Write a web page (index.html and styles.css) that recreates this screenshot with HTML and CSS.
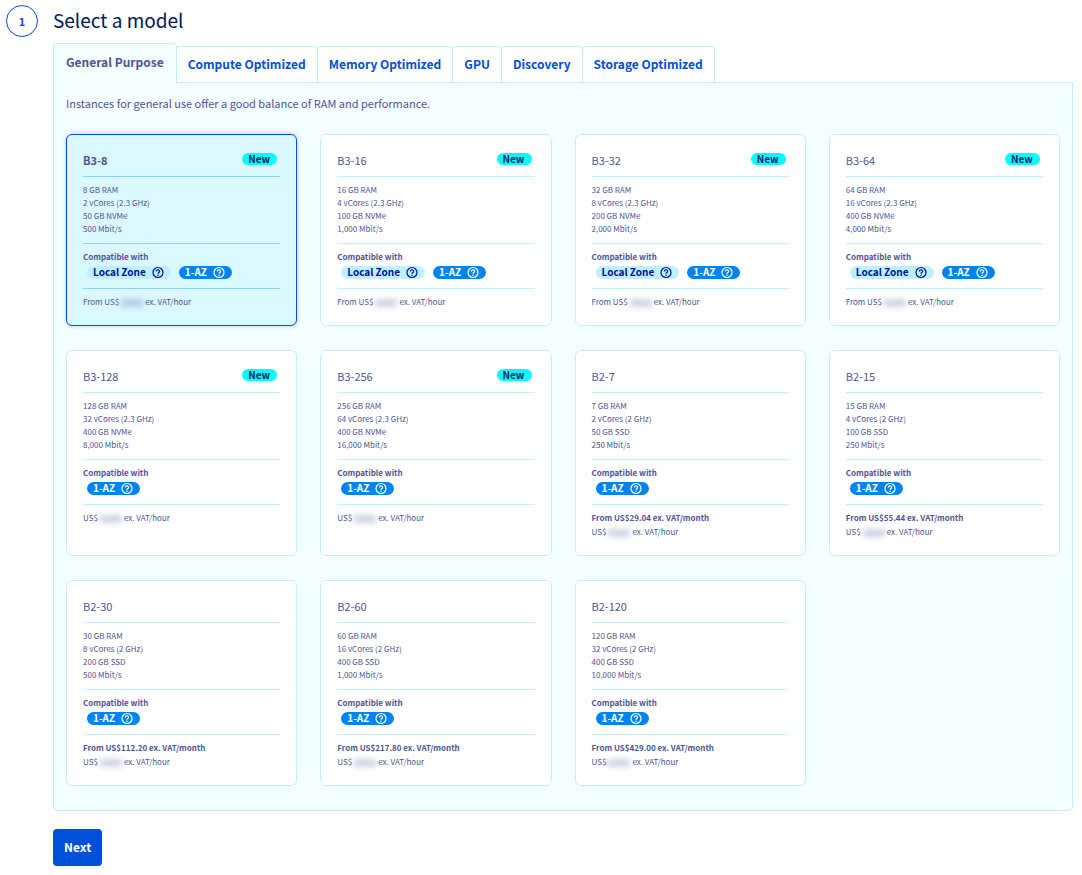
FILE: index.html
```html
<!DOCTYPE html>
<html lang="en">
<head>
    <meta charset="UTF-8">
    <meta name="viewport" content="width=device-width, initial-scale=1.0">
    <title>Select a model</title>
    <link rel="stylesheet" href="styles.css">
</head>
<body>
    <svg class="sprite" aria-hidden="true">
        <symbol id="help" viewBox="0 0 12 12">
            <circle cx="6" cy="6" r="5" fill="none" stroke="currentColor" stroke-width="1.2"/>
            <path d="M4.4 4.9a1.6 1.5 0 1 1 2.5 1.2C6.300 6.500 6 6.700 6 7.300" fill="none" stroke="currentColor" stroke-width="1.2"/>
            <circle cx="6" cy="8.700" r="0.750" fill="currentColor"/>
        </symbol>
    </svg>

    <main class="step">
        <div class="step-number">1</div>
        <div class="step-body">
            <h1>Select a model</h1>
            <div class="tabs" role="tablist">
                <button class="tab active" role="tab" aria-selected="true">General Purpose</button>
                <button class="tab" role="tab">Compute Optimized</button>
                <button class="tab" role="tab">Memory Optimized</button>
                <button class="tab" role="tab">GPU</button>
                <button class="tab" role="tab">Discovery</button>
                <button class="tab" role="tab">Storage Optimized</button>
            </div>
            <section class="panel">
                <p class="intro">Instances for general use offer a good balance of RAM and performance.</p>
                <div class="models">
                    <label class="card">
                        <input type="radio" name="model" value="b3-8" checked>
                        <span class="card-head"><span class="name">B3-8</span><span class="badge new">New</span></span>
                        <span class="specs">8 GB RAM<br>2 vCores (2.3 GHz)<br>50 GB NVMe<br>500 Mbit/s</span>
                        <span class="compat">
                            <b>Compatible with</b>
                            <span class="badges">
                                <span class="badge local">Local Zone <svg><use href="#help"/></svg></span>
                                <span class="badge az">1-AZ <svg><use href="#help"/></svg></span>
                            </span>
                        </span>
                        <span class="price"><span>From US$<i class="masked"></i>ex. VAT/hour</span></span>
                    </label>
                    <label class="card">
                        <input type="radio" name="model" value="b3-16">
                        <span class="card-head"><span class="name">B3-16</span><span class="badge new">New</span></span>
                        <span class="specs">16 GB RAM<br>4 vCores (2.3 GHz)<br>100 GB NVMe<br>1,000 Mbit/s</span>
                        <span class="compat">
                            <b>Compatible with</b>
                            <span class="badges">
                                <span class="badge local">Local Zone <svg><use href="#help"/></svg></span>
                                <span class="badge az">1-AZ <svg><use href="#help"/></svg></span>
                            </span>
                        </span>
                        <span class="price"><span>From US$<i class="masked"></i>ex. VAT/hour</span></span>
                    </label>
                    <label class="card">
                        <input type="radio" name="model" value="b3-32">
                        <span class="card-head"><span class="name">B3-32</span><span class="badge new">New</span></span>
                        <span class="specs">32 GB RAM<br>8 vCores (2.3 GHz)<br>200 GB NVMe<br>2,000 Mbit/s</span>
                        <span class="compat">
                            <b>Compatible with</b>
                            <span class="badges">
                                <span class="badge local">Local Zone <svg><use href="#help"/></svg></span>
                                <span class="badge az">1-AZ <svg><use href="#help"/></svg></span>
                            </span>
                        </span>
                        <span class="price"><span>From US$<i class="masked"></i>ex. VAT/hour</span></span>
                    </label>
                    <label class="card">
                        <input type="radio" name="model" value="b3-64">
                        <span class="card-head"><span class="name">B3-64</span><span class="badge new">New</span></span>
                        <span class="specs">64 GB RAM<br>16 vCores (2.3 GHz)<br>400 GB NVMe<br>4,000 Mbit/s</span>
                        <span class="compat">
                            <b>Compatible with</b>
                            <span class="badges">
                                <span class="badge local">Local Zone <svg><use href="#help"/></svg></span>
                                <span class="badge az">1-AZ <svg><use href="#help"/></svg></span>
                            </span>
                        </span>
                        <span class="price"><span>From US$<i class="masked"></i>ex. VAT/hour</span></span>
                    </label>
                    <label class="card">
                        <input type="radio" name="model" value="b3-128">
                        <span class="card-head"><span class="name">B3-128</span><span class="badge new">New</span></span>
                        <span class="specs">128 GB RAM<br>32 vCores (2.3 GHz)<br>400 GB NVMe<br>8,000 Mbit/s</span>
                        <span class="compat">
                            <b>Compatible with</b>
                            <span class="badges">
                                <span class="badge az">1-AZ <svg><use href="#help"/></svg></span>
                            </span>
                        </span>
                        <span class="price"><span>US$<i class="masked"></i>ex. VAT/hour</span></span>
                    </label>
                    <label class="card">
                        <input type="radio" name="model" value="b3-256">
                        <span class="card-head"><span class="name">B3-256</span><span class="badge new">New</span></span>
                        <span class="specs">256 GB RAM<br>64 vCores (2.3 GHz)<br>400 GB NVMe<br>16,000 Mbit/s</span>
                        <span class="compat">
                            <b>Compatible with</b>
                            <span class="badges">
                                <span class="badge az">1-AZ <svg><use href="#help"/></svg></span>
                            </span>
                        </span>
                        <span class="price"><span>US$<i class="masked"></i>ex. VAT/hour</span></span>
                    </label>
                    <label class="card">
                        <input type="radio" name="model" value="b2-7">
                        <span class="card-head"><span class="name">B2-7</span></span>
                        <span class="specs">7 GB RAM<br>2 vCores (2 GHz)<br>50 GB SSD<br>250 Mbit/s</span>
                        <span class="compat">
                            <b>Compatible with</b>
                            <span class="badges">
                                <span class="badge az">1-AZ <svg><use href="#help"/></svg></span>
                            </span>
                        </span>
                        <span class="price"><b>From US$29.04 ex. VAT/month</b><span>US$<i class="masked"></i>ex. VAT/hour</span></span>
                    </label>
                    <label class="card">
                        <input type="radio" name="model" value="b2-15">
                        <span class="card-head"><span class="name">B2-15</span></span>
                        <span class="specs">15 GB RAM<br>4 vCores (2 GHz)<br>100 GB SSD<br>250 Mbit/s</span>
                        <span class="compat">
                            <b>Compatible with</b>
                            <span class="badges">
                                <span class="badge az">1-AZ <svg><use href="#help"/></svg></span>
                            </span>
                        </span>
                        <span class="price"><b>From US$55.44 ex. VAT/month</b><span>US$<i class="masked"></i>ex. VAT/hour</span></span>
                    </label>
                    <label class="card">
                        <input type="radio" name="model" value="b2-30">
                        <span class="card-head"><span class="name">B2-30</span></span>
                        <span class="specs">30 GB RAM<br>8 vCores (2 GHz)<br>200 GB SSD<br>500 Mbit/s</span>
                        <span class="compat">
                            <b>Compatible with</b>
                            <span class="badges">
                                <span class="badge az">1-AZ <svg><use href="#help"/></svg></span>
                            </span>
                        </span>
                        <span class="price"><b>From US$112.20 ex. VAT/month</b><span>US$<i class="masked"></i>ex. VAT/hour</span></span>
                    </label>
                    <label class="card">
                        <input type="radio" name="model" value="b2-60">
                        <span class="card-head"><span class="name">B2-60</span></span>
                        <span class="specs">60 GB RAM<br>16 vCores (2 GHz)<br>400 GB SSD<br>1,000 Mbit/s</span>
                        <span class="compat">
                            <b>Compatible with</b>
                            <span class="badges">
                                <span class="badge az">1-AZ <svg><use href="#help"/></svg></span>
                            </span>
                        </span>
                        <span class="price"><b>From US$217.80 ex. VAT/month</b><span>US$<i class="masked"></i>ex. VAT/hour</span></span>
                    </label>
                    <label class="card">
                        <input type="radio" name="model" value="b2-120">
                        <span class="card-head"><span class="name">B2-120</span></span>
                        <span class="specs">120 GB RAM<br>32 vCores (2 GHz)<br>400 GB SSD<br>10,000 Mbit/s</span>
                        <span class="compat">
                            <b>Compatible with</b>
                            <span class="badges">
                                <span class="badge az">1-AZ <svg><use href="#help"/></svg></span>
                            </span>
                        </span>
                        <span class="price"><b>From US$429.00 ex. VAT/month</b><span>US$<i class="masked"></i>ex. VAT/hour</span></span>
                    </label>
                </div>
            </section>
            <button class="next-btn">Next</button>
        </div>
    </main>
</body>
</html>
```
FILE: styles.css
```css
* {
    box-sizing: border-box;
    margin: 0;
    padding: 0;
}
body {
    font-family: "Noto Sans CJK SC", "Noto Sans", sans-serif;
    font-size: 8px;
    line-height: 13px;
    color: #4d5592;
    background: #fff;
}
button {
    font-family: inherit;
    cursor: pointer;
}
.sprite {
    display: none;
}
.step {
    display: flex;
    align-items: flex-start;
    gap: 15px;
    padding: 5px 9px 9px 6px;
}
.step-number {
    flex: none;
    width: 32px;
    height: 32px;
    border: 1px solid #0050d7;
    border-radius: 50%;
    font-size: 11px;
    font-weight: bold;
    line-height: 30px;
    text-align: center;
    color: #0050d7;
}
.step-body {
    flex: 1;
    min-width: 0;
}
h1 {
    font-size: 19px;
    font-weight: normal;
    line-height: 30px;
    color: #00185e;
    margin-bottom: 8px;
}
.tabs {
    display: flex;
    align-items: flex-end;
}
.tab {
    height: 36px;
    padding: 0 11px 2px;
    border: 1px solid #bef1ff;
    border-bottom: none;
    border-radius: 4px 4px 0 0;
    margin-left: -1px;
    background: #fff;
    font-size: 12px;
    font-weight: bold;
    color: #0050d7;
}
.tab.active {
    height: 40px;
    margin: 0 0 -1px;
    padding: 0 12px 4px;
    background: #f5feff;
    color: #4d5592;
    z-index: 1;
}
.panel {
    border: 1px solid #bef1ff;
    border-radius: 0 0 4px 4px;
    background: #f5feff;
    padding: 12px 12px 24px;
}
.intro {
    font-size: 11px;
    line-height: 16px;
    margin-bottom: 23px;
}
.models {
    display: grid;
    grid-template-columns: repeat(4, 1fr);
    gap: 24px 23px;
}
.card {
    display: flex;
    flex-direction: column;
    min-width: 0;
    padding: 16px;
    border: 1px solid #bef1ff;
    border-radius: 6px;
    background: #fff;
    cursor: pointer;
}
.card input {
    position: absolute;
    opacity: 0;
    pointer-events: none;
}
.card:has(input:checked) {
    border-color: #0050d7;
    background: #dbf8ff;
    box-shadow: 0 0 4px rgba(0, 80, 215, 0.3);
}
.card-head {
    display: flex;
    justify-content: space-between;
    height: 26px;
    padding-right: 3px;
    border-bottom: 1px solid #bef1ff;
}
.name {
    font-size: 11px;
    line-height: 18px;
}
.specs, .compat {
    padding: 6px 0 8px;
    border-bottom: 1px solid #bef1ff;
}
.compat {
    padding-bottom: 9px;
}
.compat b, .price b, .price span {
    display: block;
}
.price {
    display: grid;
    gap: 1px;
    padding: 6px 0 1px;
}
.card:has(input:checked) .name {
    font-weight: bold;
}
.card:has(input:checked) .card-head,
.card:has(input:checked) .specs,
.card:has(input:checked) .compat {
    border-color: #85d9fd;
}
.badges {
    display: flex;
    gap: 8px;
    margin: 3px 4px 0;
}
.badge {
    display: flex;
    align-items: flex-start;
    gap: 6px;
    height: 13px;
    padding: 0 7px 0 6px;
    border-radius: 7px;
    font-size: 10px;
    font-weight: bold;
    line-height: 11px;
}
.badge svg {
    width: 12px;
    height: 13px;
}
.new {
    height: 12px;
    margin-top: 2px;
    background: #00ffff;
    color: #00185e;
}
.local {
    background: #bef1ff;
    color: #000e9c;
}
.az {
    background: #0083f2;
    color: #fff;
}
.price .masked {
    display: inline-block;
    width: 22px;
    height: 6px;
    margin: 0 2px;
    vertical-align: middle;
    background: rgba(77, 85, 146, 0.35);
    filter: blur(3px);
}
.next-btn {
    display: block;
    height: 37px;
    margin-top: 18px;
    padding: 0 11px 2px;
    border: none;
    border-radius: 4px;
    background: #0050d7;
    font-size: 12px;
    font-weight: bold;
    color: #fff;
}
```
